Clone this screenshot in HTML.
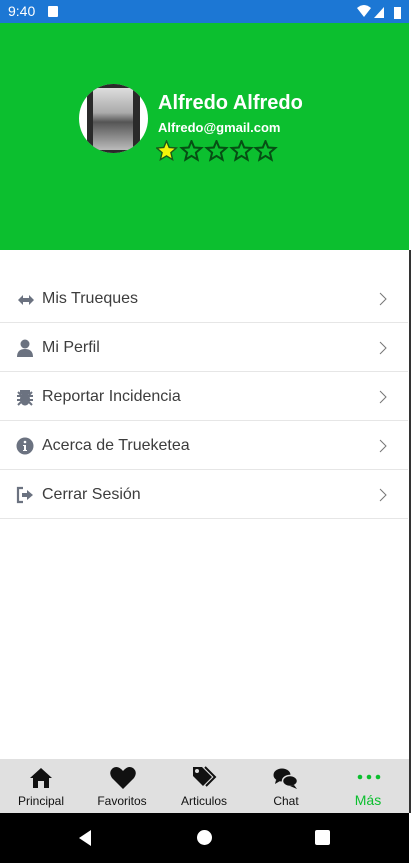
<!DOCTYPE html>
<html><head><meta charset="utf-8"><style>
*{margin:0;padding:0;box-sizing:border-box}
body{width:411px;height:863px;overflow:hidden;background:#fff;font-family:"Liberation Sans",sans-serif;position:relative}
.sb{position:absolute;top:0;left:0;width:409px;height:23px;background:#1c77d4;color:#fff;font-size:14px}
.hdr{position:absolute;top:23px;left:0;width:409px;height:227px;background:#0cbf2f}
.edge{position:absolute;top:250px;right:0;width:2px;height:563px;background:#333}
.av{position:absolute;left:79px;top:84px;width:69px;height:69px;border-radius:50%;background:#fff;overflow:hidden}
.row{position:absolute;left:0;width:408px;height:49px;border-bottom:1px solid #e6e6e6;color:#3d3d3d;font-size:16px}
.row span{position:absolute;left:42px;top:16px}
.row svg.i{position:absolute;left:16px;top:16px}
.row .ch{position:absolute;right:20px;top:18px}
.tab{position:absolute;top:759px;left:0;width:409px;height:54px;background:#e0e0e0}
.t{position:absolute;top:35px;font-size:12px;color:#111;transform:translateX(-50%)}
.nav{position:absolute;top:813px;left:0;width:409px;height:50px;background:#000}
</style></head><body>
<div class="sb"><span style="position:absolute;left:8px;top:3px">9:40</span>
<div style="position:absolute;left:48px;top:6px;width:10px;height:11px;background:#fff;border-radius:1px"></div>
<svg style="position:absolute;left:357px;top:5px" width="48" height="14"><path d="M0 3Q7-3 14 3L7 12Z" fill="#fff"/><path d="M17 13L27 2V13Z" fill="#fff"/><rect x="37" y="2" width="7" height="12" fill="#fff"/></svg></div>
<div class="hdr"></div>
<div class="av"><div style="position:absolute;left:8px;top:0;width:53px;height:69px;background:#2a2a2a"></div><div style="position:absolute;left:14px;top:4px;width:40px;height:62px;background:linear-gradient(180deg,#ddd,#aaa 40%,#555 55%,#bbb)"></div></div>
<div style="position:absolute;left:158px;top:92px;color:#fff;font-weight:bold;font-size:20px">Alfredo Alfredo</div>
<div style="position:absolute;left:158px;top:120px;color:#fff;font-weight:bold;font-size:13px">Alfredo@gmail.com</div>
<svg style="position:absolute;left:156px;top:140px" width="124" height="24">
<defs><path id="s" d="M10.5 1L13.2 7.5 20.3 8 14.9 12.6 16.6 19.6 10.5 15.9 4.4 19.6 6.1 12.6 0.7 8 7.8 7.5Z"/></defs>
<use href="#s" fill="#f4f40a" stroke="#1a5a1a" stroke-width="1.4"/>
<use href="#s" x="25" fill="none" stroke="#064f14" stroke-width="2"/>
<use href="#s" x="50" fill="none" stroke="#064f14" stroke-width="2"/>
<use href="#s" x="75" fill="none" stroke="#064f14" stroke-width="2"/>
<use href="#s" x="99" fill="none" stroke="#064f14" stroke-width="2"/></svg>

<div class="row" style="top:274px"><svg class="i" width="20" height="20"><path d="M2 10L7 5V8H13V5L18 10 13 15V12H7V15Z" fill="#6b7280"/></svg><span>Mis Trueques</span><svg class="ch" width="10" height="14"><path d="M2 1L8 7 2 13" fill="none" stroke="#777" stroke-width="1"/></svg></div>
<div class="row" style="top:323px"><svg class="i" width="20" height="20"><circle cx="9" cy="5" r="4.5" fill="#6b7280"/><path d="M1 18Q1 10 9 10Q17 10 17 18Z" fill="#6b7280"/></svg><span>Mi Perfil</span><svg class="ch" width="10" height="14"><path d="M2 1L8 7 2 13" fill="none" stroke="#777" stroke-width="1"/></svg></div>
<div class="row" style="top:372px"><svg class="i" width="20" height="20"><ellipse cx="9" cy="11" rx="5" ry="6.5" fill="#6b7280"/><path d="M5 3H13V5H5Z M1 8H17M1 12H17M2 17L5 14M16 17L13 14M2 4L5 7M16 4L13 7" stroke="#6b7280" stroke-width="2" fill="#6b7280"/></svg><span>Reportar Incidencia</span><svg class="ch" width="10" height="14"><path d="M2 1L8 7 2 13" fill="none" stroke="#777" stroke-width="1"/></svg></div>
<div class="row" style="top:421px"><svg class="i" width="20" height="20"><circle cx="9" cy="9" r="8.5" fill="#6b7280"/><circle cx="9" cy="5" r="1.3" fill="#fff"/><path d="M7 8H10V13H11V14H7V13H8V9H7Z" fill="#fff"/></svg><span>Acerca de Trueketea</span><svg class="ch" width="10" height="14"><path d="M2 1L8 7 2 13" fill="none" stroke="#777" stroke-width="1"/></svg></div>
<div class="row" style="top:470px"><svg class="i" width="20" height="20"><path d="M7 2H2V16H7" fill="none" stroke="#6b7280" stroke-width="2.2"/><path d="M6 7H11V4L17 9 11 14V11H6Z" fill="#6b7280"/></svg><span>Cerrar Sesión</span><svg class="ch" width="10" height="14"><path d="M2 1L8 7 2 13" fill="none" stroke="#777" stroke-width="1"/></svg></div>

<div class="tab">
<svg style="position:absolute;left:29px;top:8px" width="24" height="22"><path d="M12 1L23 11H20V21H15V14H9V21H4V11H1Z" fill="#111"/></svg>
<svg style="position:absolute;left:110px;top:7px" width="26" height="24"><path d="M13 23L2 12Q-2 6 3 2Q8 -1 13 5Q18 -1 23 2Q28 6 24 12Z" fill="#111"/></svg>
<svg style="position:absolute;left:191px;top:6px" width="26" height="26"><path d="M2 2H11L21 12 12 21 2 11Z" fill="#111"/><circle cx="6" cy="6" r="2" fill="#e0e0e0"/><path d="M14 2L24 12 15 21" fill="none" stroke="#111" stroke-width="2"/></svg>
<svg style="position:absolute;left:273px;top:9px" width="26" height="22"><ellipse cx="9" cy="7" rx="8.5" ry="6.5" fill="#111"/><path d="M3 12L2 16 7 13Z" fill="#111"/><ellipse cx="17" cy="13" rx="7.5" ry="5.5" fill="#111" stroke="#e0e0e0" stroke-width="1.5"/><path d="M21 17L24 21 17 18Z" fill="#111"/></svg>
<svg style="position:absolute;left:357px;top:15px" width="24" height="6"><circle cx="3" cy="3" r="2.3" fill="#0cbf2f"/><circle cx="12" cy="3" r="2.3" fill="#0cbf2f"/><circle cx="21" cy="3" r="2.3" fill="#0cbf2f"/></svg>
<div class="t" style="left:41px">Principal</div><div class="t" style="left:122px">Favoritos</div><div class="t" style="left:204px">Articulos</div><div class="t" style="left:286px">Chat</div><div class="t" style="left:368px;color:#0cbf2f;font-size:14px;top:33px">Más</div>
</div>
<div class="nav">
<svg style="position:absolute;left:78px;top:16px" width="14" height="18"><path d="M13 1V17L1 9Z" fill="#fff"/></svg>
<div style="position:absolute;left:197px;top:17px;width:15px;height:15px;border-radius:50%;background:#fff"></div>
<div style="position:absolute;left:315px;top:17px;width:15px;height:15px;border-radius:2px;background:#fff"></div>
</div>
<div class="edge"></div>
</body></html>
